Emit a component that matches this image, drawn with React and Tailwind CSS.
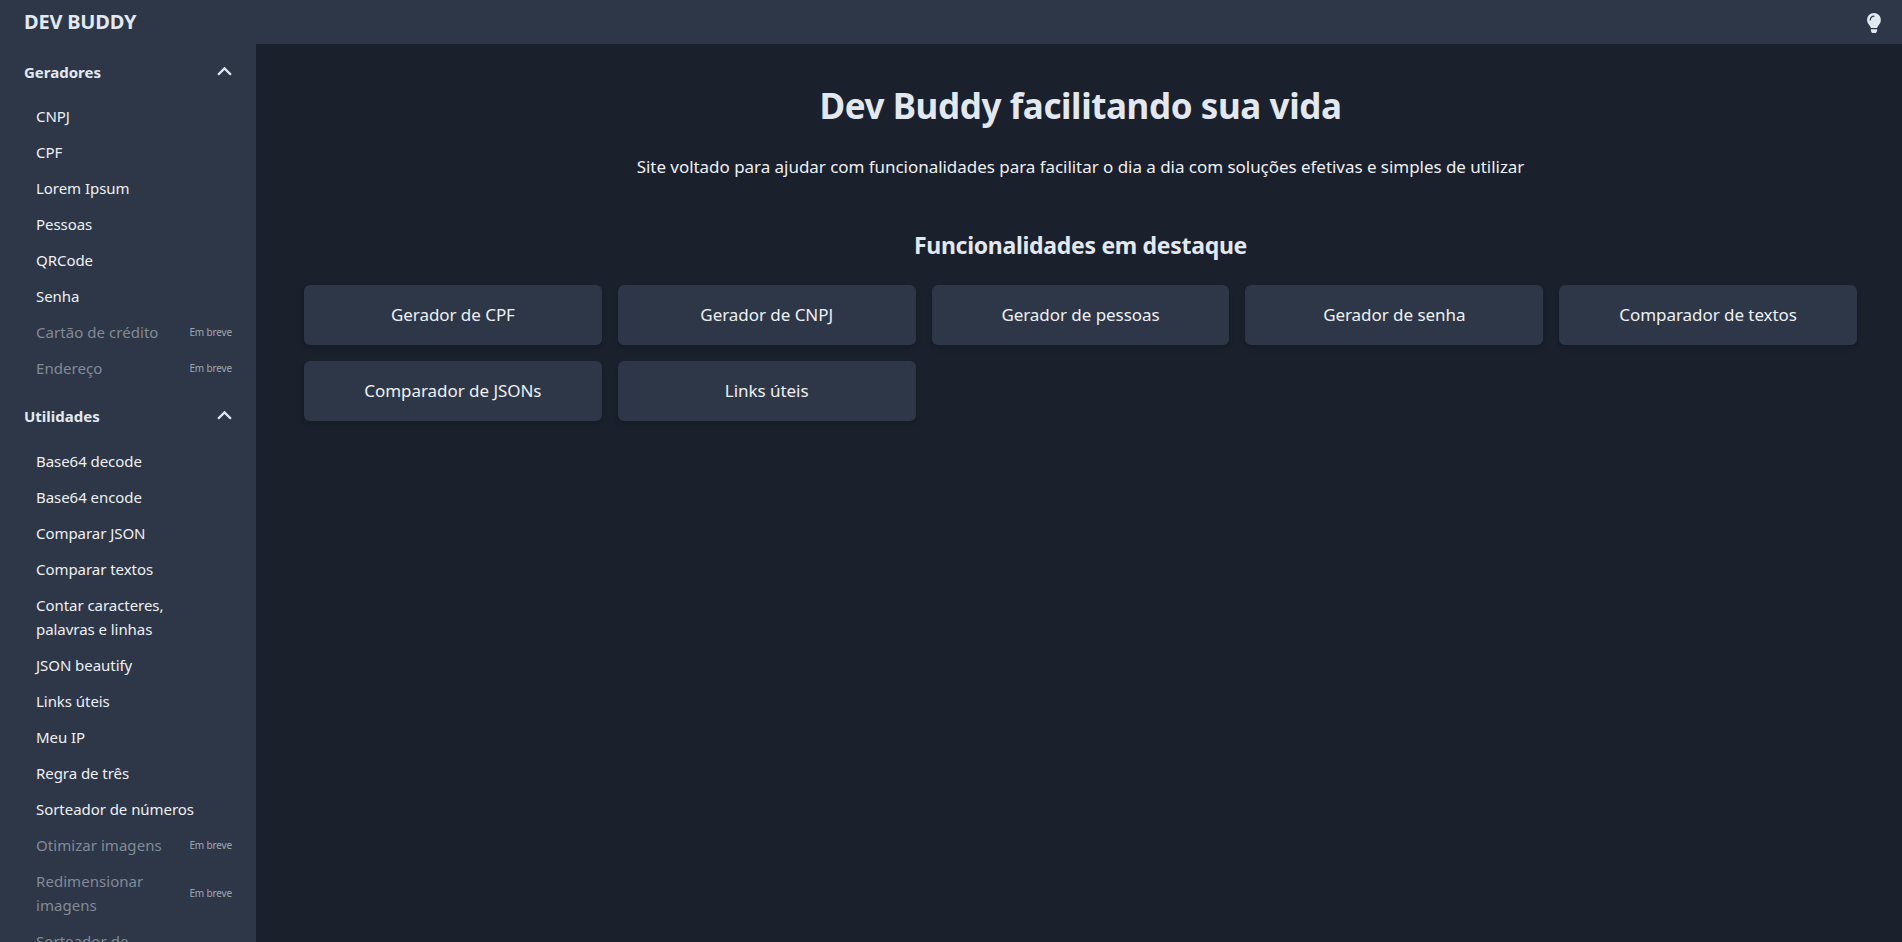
import React from "react";
import { FaLightbulb } from "react-icons/fa";

const gerad = [["CNPJ"],["CPF"],["Lorem Ipsum"],["Pessoas"],["QRCode"],["Senha"],["Cartão de crédito",1],["Endereço",1]];
const util = [["Base64 decode"],["Base64 encode"],["Comparar JSON"],["Comparar textos"],["Contar caracteres, palavras e linhas"],["JSON beautify"],["Links úteis"],["Meu IP"],["Regra de três"],["Sorteador de números"],["Otimizar imagens",1],["Redimensionar imagens",1],["Sorteador de nomes",1]];
const cards = ["Gerador de CPF","Gerador de CNPJ","Gerador de pessoas","Gerador de senha","Comparador de textos","Comparador de JSONs","Links úteis"];

function Chevron() {
  return (
    <svg viewBox="0 0 24 24" className="w-[29px] h-[29px] fill-[#e2e8f0] shrink-0 mr-[-7px] mt-[-2px]">
      <path d="M7.41 15.41L12 10.83l4.59 4.58L18 14l-6-6-6 6z" />
    </svg>
  );
}

function Item({ label, soon }) {
  return (
    <div className="flex items-center justify-between pl-9 pr-6 py-1.5">
      <span className={`text-[15px] leading-6 ${soon ? "text-[#828a96] max-w-[132px] tracking-[0.05px]" : "text-[#edf0f3] max-w-[170px] tracking-[-0.05px]"}`}>{label}</span>
      {soon && <span className="text-[10px] tracking-[-0.15px] text-[#a0a7b2] whitespace-nowrap ml-2 shrink-0">Em breve</span>}
    </div>
  );
}

function Group({ title, items, space, tail }) {
  return (
    <div className={tail}>
      <div className={`flex items-center justify-between h-10 pl-6 pr-6 ${space}`}>
        <span className="text-[15px] font-bold text-[#e2e8f0]">{title}</span>
        <Chevron />
      </div>
      {items.map(([l, s]) => <Item key={l} label={l} soon={s} />)}
    </div>
  );
}

export default function App() {
  return (
    <div className="h-[942px] overflow-hidden flex flex-col bg-[#1a202c] font-['Noto_Sans',sans-serif]">
      <header className="h-11 shrink-0 bg-[#2d3748] flex items-center justify-between pl-6 pr-[18px]">
        <span className="text-[20px] font-bold tracking-[-0.2px] text-[#e2e8f0]">DEV BUDDY</span>
        <FaLightbulb className="text-[#e2e8f0] text-[20px] mt-[1px]" />
      </header>
      <div className="flex-1 flex min-h-0">
        <aside className="w-64 shrink-0 bg-[#2d3748] overflow-hidden pt-2">
          <Group title="Geradores" items={gerad} space="mb-[6px]" tail="pb-[10px]" />
          <Group title="Utilidades" items={util} space="mb-[7px]" tail="pb-2" />
        </aside>
        <main className="flex-1 pl-12 pr-[45px] pt-[38px] text-[#edf0f3]">
          <h1 className="text-[35px] leading-[48px] font-bold text-center text-[#e2e8f0] tracking-[-0.4px]">Dev Buddy facilitando sua vida</h1>
          <p className="text-[17px] leading-7 text-center mt-[23px] tracking-[-0.04px]">Site voltado para ajudar com funcionalidades para facilitar o dia a dia com soluções efetivas e simples de utilizar</p>
          <h2 className="text-[23px] leading-8 font-bold text-center mt-[48px] text-[#e2e8f0] tracking-[-0.3px]">Funcionalidades em destaque</h2>
          <div className="grid grid-cols-5 gap-4 mt-[24px]">
            {cards.map((c) => (
              <div key={c} className="h-[60px] rounded-md bg-[#2d3748] shadow-[0_4px_6px_-1px_rgba(0,0,0,0.1),0_2px_4px_-1px_rgba(0,0,0,0.06)] flex items-center justify-center text-[17px] tracking-[-0.05px]">{c}</div>
            ))}
          </div>
        </main>
      </div>
    </div>
  );
}
